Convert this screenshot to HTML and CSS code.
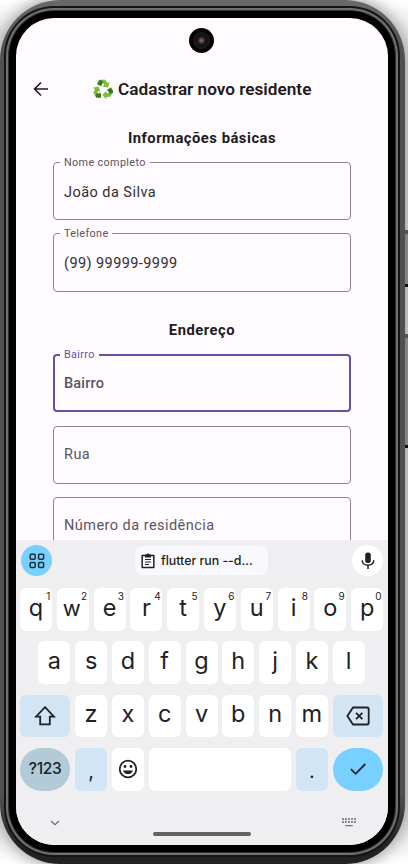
FILE: index.html
```
<!DOCTYPE html>
<html lang="pt-BR">
<head>
<meta charset="utf-8">
<title>Cadastrar novo residente</title>
<link rel="stylesheet" href="styles.css">
</head>
<body>
<div class="stage">
<i class="side power"></i><i class="side volume"></i>
<div class="device">
<i class="camera"></i>
<main class="screen">
<section class="app">
  <header class="bar">
    <svg class="back" viewBox="0 0 16 16"><path d="M15 8H2M8 1.5L1.5 8L8 14.5"/></svg>
    <svg class="recycle" viewBox="0 0 20 20">
      <defs><g id="arrow"><path fill="#80bd3b" d="M7 .8H12.4L14.5 4L16.8 2.9L14.9 8.5L9.1 7.4L11.2 6.1L9.4 3.2Z"/><path fill="#367d17" d="M7 .8Q9 .5 10 3.4L8 7.2L4 4.9L6 1.5Z"/></g></defs>
      <use href="#arrow"/><use href="#arrow" transform="rotate(120 10 10.7)"/><use href="#arrow" transform="rotate(240 10 10.7)"/>
    </svg>
    <h1>Cadastrar novo residente</h1>
  </header>
  <h2>Informações básicas</h2>
  <fieldset class="field"><legend>Nome completo</legend><p>João da Silva</p></fieldset>
  <fieldset class="field second"><legend>Telefone</legend><p class="phone">(99) 99999-9999</p></fieldset>
  <h2 class="address">Endereço</h2>
  <fieldset class="field focus"><legend>Bairro</legend><p>Bairro</p></fieldset>
  <div class="field plain"><p>Rua</p></div>
  <div class="field plain last"><p>Número da residência</p></div>
</section>
<section class="keyboard">
  <div class="tools">
    <span class="round blue"><svg width="16" height="16" viewBox="0 0 16 16"><g fill="none" stroke="#17303d" stroke-width="1.5"><rect x="1.2" y="1.2" width="5" height="5" rx="1"/><rect x="9.6" y="1.2" width="5" height="5" rx="1"/><rect x="1.2" y="9.4" width="5" height="5" rx="1"/><rect x="9.6" y="9.4" width="5" height="5" rx="1"/></g></svg></span>
    <span class="clip"><svg width="14" height="16" viewBox="0 0 14 16"><path d="M1.2 2.5H12.8V14.5H1.2Z" fill="none" stroke="#202124" stroke-width="1.5" stroke-linejoin="round"/><path d="M4 1.6H5.3A1.8 1.8 0 0 1 8.7 1.6H10V4.5H4Z" fill="#202124"/><path d="M4 6.5H10M4 9H10M4 11.5H8" stroke="#202124" stroke-width="1.2"/></svg>flutter run --d...</span>
    <span class="round"><svg width="14" height="18" viewBox="0 0 14 18"><rect x="4.2" y=".5" width="5.6" height="10.5" rx="2.5" fill="#202124"/><path d="M1.2 8.2C1.2 15 12.8 15 12.8 8.2M7 13V17" fill="none" stroke="#202124" stroke-width="1.5"/></svg></span>
  </div>
  <div class="row"><b>q<sup>1</sup></b><b class="w">w<sup>2</sup></b><b>e<sup>3</sup></b><b>r<sup>4</sup></b><b>t<sup>5</sup></b><b>y<sup>6</sup></b><b>u<sup>7</sup></b><b>i<sup>8</sup></b><b>o<sup>9</sup></b><b>p<sup>0</sup></b></div>
  <div class="row"><b>a</b><b>s</b><b>d</b><b>f</b><b>g</b><b>h</b><b>j</b><b>k</b><b>l</b></div>
  <div class="row">
    <b class="wide tint"><svg width="22" height="20" viewBox="0 0 22 20"><path d="M11 1.2L20 10.6H15.8V18.4H6.2V10.6H2Z"/></svg></b>
    <b>z</b><b>x</b><b>c</b><b>v</b><b>b</b><b>n</b><b>m</b>
    <b class="wide tint"><svg width="24" height="20" viewBox="0 0 24 20"><path d="M7 1.5H21Q22.7 1.5 22.7 3.2V16.8Q22.7 18.5 21 18.5H7L1.4 10ZM10 6.8L16.4 13.2M16.4 6.8L10 13.2"/></svg></b>
  </div>
  <div class="row">
    <b class="wide pill symbols">?123</b><b class="tint comma">,</b>
    <b><svg width="20" height="20" viewBox="0 0 20 20"><circle cx="10" cy="10" r="8.3"/><circle class="dot" cx="7" cy="7.5" r="1.4"/><circle class="dot" cx="13" cy="7.5" r="1.4"/><path class="dot" d="M5 11.4H15C13.6 16.2 6.4 16.2 5 11.4Z"/></svg></b>
    <b class="space"></b><b class="tint comma">.</b>
    <b class="wide pill enter"><svg width="18" height="14" viewBox="0 0 18 14"><path d="M2 7.2L6.6 11.8L16.3 2"/></svg></b>
  </div>
  <footer class="nav">
    <svg class="chev" width="10" height="6" viewBox="0 0 10 6"><path d="M1 1L5 4.7L9 1" fill="none" stroke="#6d6e71" stroke-width="1.3"/></svg>
    <i class="home"></i>
    <svg width="14" height="9" viewBox="0 0 14 9"><path d="M0 1H14M0 4H14" stroke="#8a8b8e" stroke-width="1.8" stroke-dasharray="2 1"/><path d="M3.2 7.6H10.8" stroke="#77787b" stroke-width="1.2"/></svg>
  </footer>
</section>
</main>
</div>
</div>
</body>
</html>
```
FILE: styles.css
```
* { box-sizing: border-box; }
body { margin: 0; background: #fff; font-family: Roboto, sans-serif; color: #1d1b20; overflow: hidden; }
h1, h2, p { margin: 0; }
svg { display: block; flex: none; }
.stage { position: relative; width: 408px; height: 864px; overflow: hidden; background: linear-gradient(#fff, #ccc 8%, #ccc 92%, #fff); }
.side { position: absolute; z-index: 1; right: 0; width: 3px; background: #858585; border-top: 4px solid #555; border-bottom: 3px solid #111; }
.power { top: 230px; height: 57px; }
.volume { top: 334px; height: 114px; }
.device {
  position: relative; width: 405px; height: 864px; padding: 18px 17px 19px 16px;
  border-radius: 60px; background: linear-gradient(#6a6a6a, #505050 6%, #505050 92%, #222 98%);
  box-shadow: 0 0 14px 3px #aaa;
}
.screen {
  width: 372px; height: 827px; border-radius: 38px; overflow: hidden; background: #fffbff;
  display: flex; flex-direction: column;
  box-shadow: 0 0 0 7px #000, 0 0 0 8px #333, 0 0 0 10px #707070, 0 0 0 12px #151515;
}
.camera { position: absolute; left: 189px; top: 28px; width: 25px; height: 25px; border-radius: 50%; background: radial-gradient(circle at 50% 50%, #80605c 0 1px, #302824 3px, #111 5px, #191919 8px, #000 9px); }
.app { height: 522px; overflow: hidden; padding: 0 37px; flex: none; }
.bar { display: flex; align-items: center; height: 20px; margin: 61px -20px 0; }
.back { width: 16px; height: 16px; fill: none; stroke: #1d1b20; stroke-width: 1.6; }
.recycle { width: 20px; height: 20px; margin-left: 44px; }
h1 { font-size: 17.2px; font-weight: 600; line-height: 20px; margin-left: 5px; white-space: nowrap; letter-spacing: 0; }
h2 { font-size: 14.8px; font-weight: 700; line-height: 18px; letter-spacing: .5px; text-align: center; height: 18px; margin-top: 30px; }
.field { display: block; position: relative; width: 297.5px; height: 63px; margin: 10px 0 0; padding: 0 10px; border: 1px solid #8a858d; border-radius: 4px; min-width: 0; }
.field legend { margin-left: -4px; padding: 0 4px; font-size: 10.8px; line-height: 11px; letter-spacing: .36px; color: #5a5660; }
.field p { font-size: 14.5px; line-height: 18px; letter-spacing: .46px; margin-top: 16px; color: #302e33; }
.field.second { margin-top: 8px; height: 64px; }
.field .phone { letter-spacing: .42px; }
.address { margin-top: 29px; }
.field.focus { border: 2px solid #6750a4; padding: 0 9px; height: 63px; }
.focus legend { color: #6750a4; }
.focus p, .plain p { color: #59565e; }
.focus p { font-weight: 500; letter-spacing: .2px; margin-top: 15px; }
.plain { height: 58px; margin-top: 14px; }
.plain p { margin-top: 19px; }
.plain.last { margin-top: 13px; }
.keyboard { flex: 1; background: #efeff1; font-family: Inter, sans-serif; padding: 5px 5px 0 4px; }
.tools { display: flex; justify-content: space-between; align-items: center; height: 31px; padding: 0 0 0 1px; margin-bottom: 12px; }
.round { width: 31px; height: 31px; border-radius: 50%; background: #fff; display: grid; place-items: center; }
.blue { background: #77d0ff; }
.clip { display: flex; align-items: center; gap: 6px; width: 133px; height: 29px; margin-left: -1px; padding-left: 6px; border-radius: 8px; background: #f8f9fe; font-size: 12.4px; font-weight: 450; white-space: nowrap; letter-spacing: -.02px; }
.row { display: flex; justify-content: center; gap: 4.8px; height: 42.7px; margin-bottom: 10.6px; }
.row b { position: relative; width: 32px; flex: none; border-radius: 6px; background: #fff; display: flex; align-items: center; justify-content: center; font-size: 23.5px; font-weight: 380; line-height: 26px; padding-bottom: 3px; color: #202124; }
.row .w { font-size: 22px; padding-right: 2px; }
.row sup { position: absolute; right: 1.5px; top: 3px; font-size: 10px; line-height: 10px; }
.row .wide { width: 50.3px; padding: 0; }
.row b:has(svg) { padding: 0; }
.row .tint { background: #d2e5f4; }
.row .pill { border-radius: 22px; }
.row .symbols { background: #b3cad8; font-size: 15.5px; font-weight: 450; letter-spacing: -.3px; }
.row .enter { background: #77d0ff; }
.row .space { flex: 1; }
.row .comma { font-size: 20px; padding: 4px 0 0; }
.row svg { fill: none; stroke: #202124; stroke-width: 1.8; }
.row .dot { fill: #202124; stroke: none; }
.nav { display: flex; justify-content: space-between; align-items: center; height: 20px; margin-top: 22px; padding: 0 27px 0 30px; }
.home { width: 98px; height: 4px; border-radius: 2px; background: #626264; position: relative; top: 11px; left: 1px; }
```
